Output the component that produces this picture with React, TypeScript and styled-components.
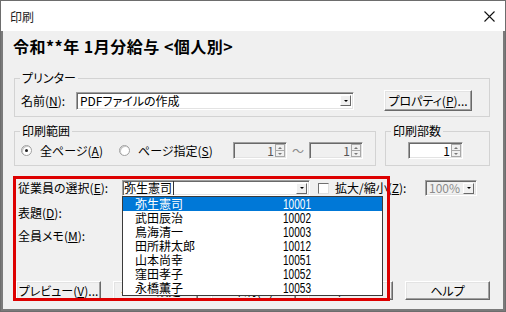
import React from 'react';
import styled, { createGlobalStyle } from 'styled-components';

const Global = createGlobalStyle`
  html, body { margin: 0; padding: 0; }
  body {
    width: 506px; height: 312px; overflow: hidden; background: #fff;
    font-family: "Noto Sans CJK JP", "Noto Sans", sans-serif;
    font-size: 12px; color: #000;
    font-feature-settings: "palt";
  }
  * { box-sizing: border-box; }
  u { text-decoration-thickness: 1px; text-underline-offset: 1px; }
`;

const Window = styled.div`
  width: 506px; height: 312px;
  border: 1px solid #6d6d6d;
  display: flex; flex-direction: column;
  background: #fff;
`;

const TitleBar = styled.div`
  height: 30px; flex: none;
  display: flex; align-items: center; justify-content: space-between;
  padding: 0 10px 0 9px;
  background: #fff;
  color: #222;
  font-size: 12px;
`;

const CloseIcon = () => (
  <svg width="11" height="11" viewBox="0 0 11 11">
    <path d="M0.5 0.5 L10.5 10.5 M10.5 0.5 L0.5 10.5" stroke="#111" strokeWidth="1.1" />
  </svg>
);

const Body = styled.div`
  flex: 1;
  display: flex; flex-direction: column;
  background: #f0f0f0;
  border: solid #7a7a7a;
  border-width: 0 2px 2px 2px;
  padding: 5px 13px 0 11px;
`;

const Heading = styled.h1`
  margin: 0 0 0 -1px;
  font-size: 16px; font-weight: bold; line-height: 20px;
  letter-spacing: 0.5px;
  font-feature-settings: normal;
`;

const Fieldset = styled.fieldset<{ $w?: number; $mt: number }>`
  margin: ${p => p.$mt}px 0 0 0;
  padding: 0; min-width: 0;
  border: 1px solid #d3d3d3;
  ${p => (p.$w ? `width: ${p.$w}px; flex: none;` : '')}
`;

const Legend = styled.legend`
  margin-left: 5px; padding: 0 2px;
  line-height: 14px; font-size: 12px;
`;

const GroupRow = styled.div<{ $pad: string }>`
  display: flex; align-items: center;
  padding: ${p => p.$pad};
`;

const Pair = styled.div`
  display: flex; gap: 9px;
`;

const Label = styled.span<{ $w?: number }>`
  flex: none;
  line-height: 16px;
  white-space: nowrap;
  ${p => (p.$w ? `width: ${p.$w}px;` : '')}
`;

const Sunken = styled.div<{ $w: number; $h: number; $bg?: string }>`
  flex: none;
  position: relative;
  width: ${p => p.$w}px; height: ${p => p.$h}px;
  background: ${p => p.$bg || '#fff'};
  border-top: 1px solid #a0a0a0; border-left: 1px solid #a0a0a0;
  border-bottom: 1px solid #fff; border-right: 1px solid #fff;
  box-shadow: inset 1px 1px 0 #696969, inset -1px -1px 0 #e3e3e3;
  display: flex; align-items: center;
`;

const FieldText = styled.span<{ $color?: string }>`
  flex: 1; min-width: 0;
  padding-left: 3px;
  line-height: 14px;
  color: ${p => p.$color || '#000'};
  white-space: nowrap;
`;

const ArrowBox = styled.span`
  flex: none;
  width: 11px; height: 11px; margin-right: 2px;
  background: #f0f0f0;
  border-top: 1px solid #fff; border-left: 1px solid #fff;
  border-bottom: 1px solid #696969; border-right: 1px solid #696969;
  display: flex; align-items: center; justify-content: center;
  &::after {
    content: '';
    border-left: 2px solid transparent; border-right: 2px solid transparent;
    border-top: 2px solid #000;
  }
`;

const SpinBtns = styled.span`
  flex: none; width: 10px; height: 13px; margin-right: 1px;
  display: flex; flex-direction: column;
`;

const SpinHalf = styled.span<{ $up?: boolean }>`
  flex: 1;
  background: #f0f0f0;
  border: 1px solid #a8a8a8;
  ${p => (p.$up ? 'border-bottom: none;' : '')}
  display: flex; align-items: center; justify-content: center;
  &::after {
    content: '';
    border-left: 2px solid transparent; border-right: 2px solid transparent;
    ${p => (p.$up ? 'border-bottom: 2px solid #777;' : 'border-top: 2px solid #777;')}
  }
`;

const SpinValue = styled.span<{ $color?: string }>`
  flex: 1; text-align: right; padding-right: 1px;
  line-height: 14px; color: ${p => p.$color || '#000'};
`;

const Button = styled.div<{ $w: number; $h: number }>`
  flex: none;
  width: ${p => p.$w}px; height: ${p => p.$h}px;
  background: #f0f0f0;
  border-top: 1px solid #fff; border-left: 1px solid #fff;
  border-bottom: 1px solid #696969; border-right: 1px solid #696969;
  box-shadow: inset -1px -1px 0 #a0a0a0, inset 1px 1px 0 #e3e3e3;
  display: flex; align-items: center; justify-content: center;
  line-height: 14px; white-space: nowrap;
`;

const Radio = styled.label<{ $w: number }>`
  flex: none; width: ${p => p.$w}px;
  display: flex; align-items: center; gap: 8px;
  line-height: 16px;
`;

const RadioDot = styled.span<{ $on?: boolean }>`
  flex: none; width: 11px; height: 11px; border-radius: 50%;
  background: #fff;
  border: 1px solid #a0a0a0;
  box-shadow: inset 1px 1px 0 #c8c8c8;
  display: flex; align-items: center; justify-content: center;
  &::after {
    content: '';
    width: 3px; height: 3px; border-radius: 50%;
    background: ${p => (p.$on ? '#222' : 'transparent')};
  }
`;

const Tilde = styled.span`
  flex: none; width: 22px; text-align: center; color: #8a8a8a;
  line-height: 16px;
`;

const Section = styled.div`
  position: relative;
  margin-top: 14px;
  display: flex; flex-direction: column;
  padding-left: 4px;
`;

const Highlight = styled.div`
  position: absolute;
  left: -1px; top: -4px;
  width: 377px; height: 125px;
  border: 3px solid #dd0000;
  pointer-events: none;
  z-index: 3;
`;

const FormRow = styled.div<{ $h: number; $mt?: number; $top?: boolean }>`
  display: flex;
  align-items: ${p => (p.$top ? 'flex-start' : 'center')};
  height: ${p => p.$h}px;
  margin-top: ${p => p.$mt || 0}px;
`;

const ComboWrap = styled.div`
  position: relative; flex: none;
`;

const ComboText = styled.span`
  flex: 1; min-width: 0; line-height: 14px; white-space: nowrap;
  & > span {
    display: inline-block; padding: 0 1px 0 1px;
    border-right: 1px solid #333;
  }
`;

const Check = styled.span`
  flex: none; width: 11px; height: 11px; margin: 0 6px 0 8px;
  background: #fff;
  border-top: 1px solid #707070; border-left: 1px solid #707070;
  border-bottom: 1px solid #e0e0e0; border-right: 1px solid #e0e0e0;
`;

const DropList = styled.ul`
  position: absolute; left: 0; top: 100%;
  width: 261px; height: 100px;
  margin: 0; padding: 0;
  list-style: none;
  background: #fff;
  border: 1px solid #3a3a3a;
  z-index: 2;
`;

const DropItem = styled.li<{ $sel?: boolean }>`
  height: 14px;
  display: flex; align-items: center;
  padding-left: 12px;
  background: ${p => (p.$sel ? '#0078d7' : 'transparent')};
  color: ${p => (p.$sel ? '#fff' : '#000')};
  line-height: 14px;
`;

const ItemName = styled.span`
  width: 148px; flex: none;
`;

const ItemCode = styled.span`
  display: inline-block;
  font-family: "Liberation Sans", sans-serif;
  font-size: 14px;
  transform: scaleX(0.72);
  transform-origin: left center;
`;

const ButtonRow = styled.div`
  display: flex; justify-content: space-between;
  margin-top: 6px; margin-left: -2px;
`;

const employees: [string, string][] = [
  ['弥生憲司', '10001'],
  ['武田辰治', '10002'],
  ['鳥海清一', '10003'],
  ['田所耕太郎', '10012'],
  ['山本尚幸', '10051'],
  ['窪田孝子', '10052'],
  ['永橋薫子', '10053'],
];

export default function App() {
  return (
    <>
      <Global />
      <Window>
        <TitleBar>
          <span>印刷</span>
          <CloseIcon />
        </TitleBar>
        <Body>
          <Heading>令和**年 1月分給与 &lt;個人別&gt;</Heading>

          <Fieldset $mt={15}>
            <Legend>プリンター</Legend>
            <GroupRow $pad="5px 17px 5px 6px">
              <Label $w={55}>名前(<u>N</u>):</Label>
              <Sunken $w={278} $h={18}>
                <FieldText>PDFファイルの作成</FieldText>
                <ArrowBox />
              </Sunken>
              <Button $w={88} $h={21} style={{ marginLeft: 30 }}>プロパティ(<u>P</u>)...</Button>
            </GroupRow>
          </Fieldset>

          <Pair>
            <Fieldset $w={362} $mt={7}>
              <Legend>印刷範囲</Legend>
              <GroupRow $pad="4px 12px 6px 6px">
                <Radio $w={98}><RadioDot $on /><span>全ページ(<u>A</u>)</span></Radio>
                <Radio $w={114}><RadioDot /><span>ページ指定(<u>S</u>)</span></Radio>
                <Sunken $w={54} $h={17} $bg="#f0f0f0">
                  <SpinValue $color="#555">1</SpinValue>
                  <SpinBtns><SpinHalf $up /><SpinHalf /></SpinBtns>
                </Sunken>
                <Tilde>～</Tilde>
                <Sunken $w={54} $h={17} $bg="#f0f0f0">
                  <SpinValue $color="#555">1</SpinValue>
                  <SpinBtns><SpinHalf $up /><SpinHalf /></SpinBtns>
                </Sunken>
              </GroupRow>
            </Fieldset>
            <Fieldset $w={105} $mt={7}>
              <Legend>印刷部数</Legend>
              <GroupRow $pad="4px 0 6px 22px">
                <Sunken $w={55} $h={17}>
                  <SpinValue>1</SpinValue>
                  <SpinBtns><SpinHalf $up /><SpinHalf /></SpinBtns>
                </Sunken>
              </GroupRow>
            </Fieldset>
          </Pair>

          <Section>
            <Highlight />
            <FormRow $h={16}>
              <Label $w={104}>従業員の選択(<u>E</u>):</Label>
              <ComboWrap>
                <Sunken $w={188} $h={16}>
                  <ComboText><span>弥生憲司</span></ComboText>
                  <ArrowBox />
                </Sunken>
                <DropList>
                  {employees.map(([name, code], i) => (
                    <DropItem key={code} $sel={i === 0}>
                      <ItemName>{name}</ItemName>
                      <ItemCode>{code}</ItemCode>
                    </DropItem>
                  ))}
                </DropList>
              </ComboWrap>
              <Check />
              <Label $w={90}>拡大/縮小(<u>Z</u>):</Label>
              <Sunken $w={52} $h={16} $bg="#f0f0f0">
                <FieldText $color="#8c8c8c">100%</FieldText>
                <ArrowBox />
              </Sunken>
            </FormRow>
            <FormRow $h={16} $mt={9}>
              <Label $w={104}>表題(<u>D</u>):</Label>
              <Sunken $w={258} $h={16} />
            </FormRow>
            <FormRow $h={47} $mt={7} $top>
              <Label $w={104}>全員メモ(<u>M</u>):</Label>
              <Sunken $w={258} $h={47} />
            </FormRow>
            <ButtonRow>
              <Button $w={85} $h={19}>プレビュー(<u>V</u>)...</Button>
              <Button $w={85} $h={19}>ページ設定...</Button>
              <Button $w={85} $h={19}>印刷(O)</Button>
              <Button $w={85} $h={19}>キャンセル</Button>
              <Button $w={85} $h={19}>ヘルプ</Button>
            </ButtonRow>
          </Section>
        </Body>
      </Window>
    </>
  );
}
